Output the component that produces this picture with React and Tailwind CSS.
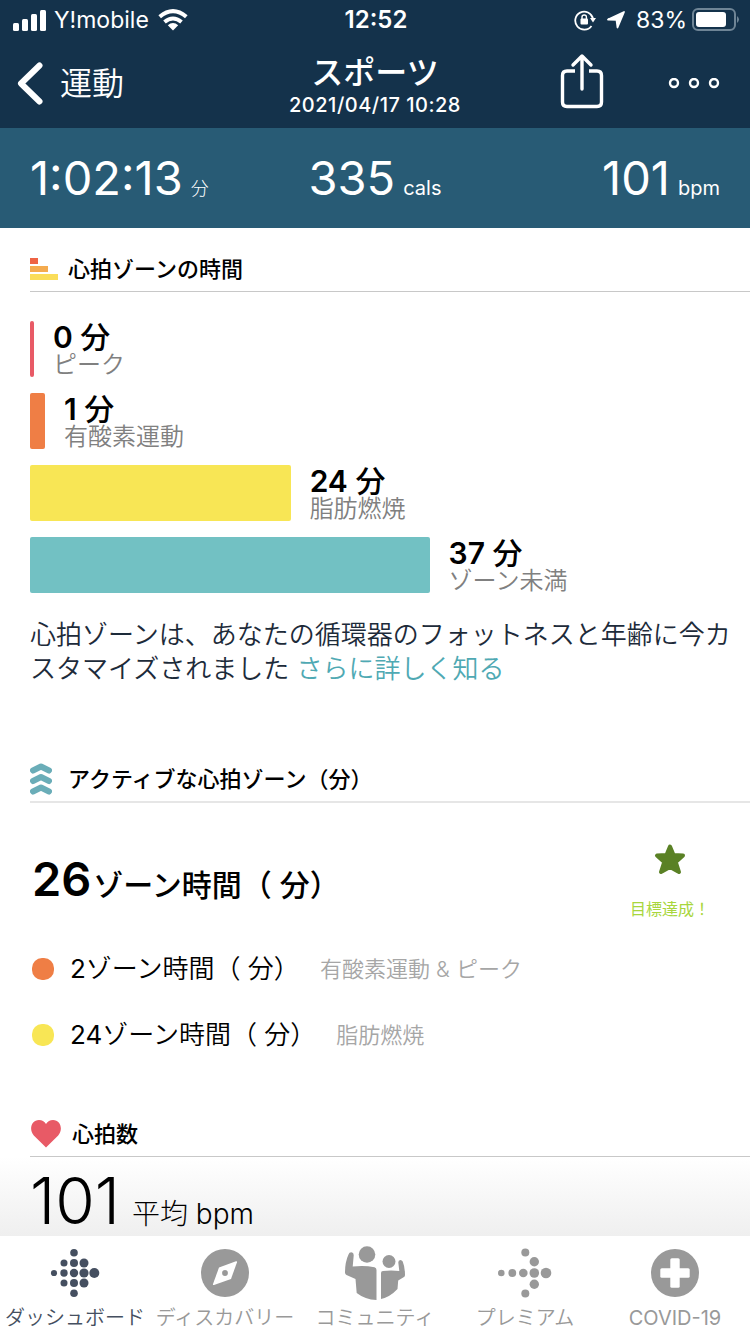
const zones = [
  { minutes: 0, label: 'ピーク', bar: 'w-1 bg-[#e85a66]' },
  { minutes: 1, label: '有酸素運動', bar: 'w-[15px] bg-[#ef7e45]' },
  { minutes: 24, label: '脂肪燃焼', bar: 'w-[36.2%] bg-[#f8e655]' },
  { minutes: 37, label: 'ゾーン未満', bar: 'w-[55.5%] bg-[#72c1c3]' },
]

const stats = [
  { value: '1:02:13', unit: '分', align: 'justify-start', unitStyle: 'text-[18px] font-light' },
  { value: '335', unit: 'cals', align: 'justify-center', unitStyle: 'text-[20px]' },
  { value: '101', unit: 'bpm', align: 'justify-end', unitStyle: 'text-[20px]' },
]

const tabs = [
  { label: 'ダッシュボード', icon: DashboardIcon, color: 'text-[#454f60]', weight: 'font-[350]' },
  { label: 'ディスカバリー', icon: CompassIcon, color: 'text-[#999999]', weight: 'font-[350]' },
  { label: 'コミュニティ', icon: CommunityIcon, color: 'text-[#999999]', weight: 'font-[350]' },
  { label: 'プレミアム', icon: PremiumIcon, color: 'text-[#999999]', weight: 'font-[350]' },
  { label: 'COVID-19', icon: CrossIcon, color: 'text-[#999999]', weight: 'font-normal' },
]

function DashboardIcon() {
  return (
    <svg width="50" height="50" viewBox="0 0 50 50" fill="currentColor" aria-hidden="true">
      <circle cx="24" cy="4.700" r="3.800" />
      <circle cx="14" cy="15" r="3.500" />
      <circle cx="24" cy="15" r="4" />
      <circle cx="34" cy="15" r="4.500" />
      <circle cx="4" cy="25" r="3.100" />
      <circle cx="14" cy="25" r="3.700" />
      <circle cx="24" cy="25" r="4.200" />
      <circle cx="34" cy="25" r="4.600" />
      <circle cx="44.300" cy="25" r="5" />
      <circle cx="14" cy="35" r="3.500" />
      <circle cx="24" cy="35" r="4" />
      <circle cx="34" cy="35" r="4.500" />
      <circle cx="24" cy="45.300" r="3.800" />
    </svg>
  )
}

function CompassIcon() {
  return (
    <svg width="50" height="50" viewBox="0 0 50 50" aria-hidden="true">
      <circle cx="25" cy="25" r="24" fill="currentColor" />
      <path d="M19 19.500 36 13.200q1.300-.3 1 1L31 31 14 37q-1.400.4-1-1z" fill="#fff" />
      <circle cx="25" cy="25" r="2.900" fill="currentColor" />
    </svg>
  )
}

function CommunityIcon() {
  return (
    <svg width="62" height="56" viewBox="0 0 62 56" fill="currentColor" aria-hidden="true">
      <circle cx="23" cy="9.500" r="8.300" />
      <circle cx="45" cy="16.500" r="6.500" />
      <path d="M4.500 9.500Q5.200 7.300 7.300 7.300 9.900 7.500 9.700 10.500L8.700 21.500Q20 20 30.500 22.200 32.500 22.700 32.500 25V55Q21 54.500 12.700 48L11.500 34 2.500 30Q1 29.300 1 27.500 1 17 4.500 9.500z" />
      <path d="M37 54V28Q37 26.200 39 26 47 25.200 55.300 26L54.300 17.500Q54.300 15 56.300 14.900 58 14.900 58.700 16.500 61 22 61 30 61 31.500 60 32L54.200 35.500 53.500 44Q46 52 37 54z" />
    </svg>
  )
}

function PremiumIcon() {
  return (
    <svg width="54" height="52" viewBox="0 0 54 52" fill="currentColor" aria-hidden="true">
      <circle cx="3.300" cy="26" r="3.300" />
      <circle cx="14.300" cy="26" r="3.900" />
      <circle cx="25.300" cy="26" r="4.300" />
      <circle cx="36.300" cy="26" r="4.800" />
      <circle cx="48" cy="26" r="5.300" />
      <circle cx="36.300" cy="14.700" r="4.700" />
      <circle cx="36.300" cy="37.300" r="4.700" />
      <circle cx="27.300" cy="5.400" r="4" />
      <circle cx="27.300" cy="46.600" r="4" />
    </svg>
  )
}

function CrossIcon() {
  return (
    <svg width="50" height="50" viewBox="0 0 50 50" aria-hidden="true">
      <circle cx="25" cy="25" r="24" fill="currentColor" />
      <rect x="20.300" y="10.300" width="9.400" height="29.400" rx="1.500" fill="#fff" />
      <rect x="10.300" y="20.300" width="29.400" height="9.400" rx="1.500" fill="#fff" />
    </svg>
  )
}

function StatusBar() {
  return (
    <div className="grid h-10 grid-cols-[1fr_auto_1fr] items-center pl-3 pr-2.5 text-[23px] leading-10">
      <div className="flex items-center gap-2">
        <svg width="34" height="22" viewBox="0 0 34 22" fill="currentColor" aria-hidden="true">
          <rect x="1" y="14" width="6" height="8" rx="1.500" />
          <rect x="10" y="10" width="6" height="12" rx="1.500" />
          <rect x="19" y="5" width="6" height="17" rx="1.500" />
          <rect x="28" y="1" width="6" height="21" rx="1.500" />
        </svg>
        <span>Y!mobile</span>
        <svg width="32" height="24" viewBox="0 0 32 24" fill="none" stroke="currentColor" strokeWidth="4" aria-hidden="true">
          <path d="M2.700 8.800Q16-2.500 29.300 8.800" />
          <path d="M7.500 14Q16 7 24.500 14" />
          <path d="M16 22.500 10.800 17.200Q16 13 21.200 17.200z" fill="currentColor" stroke="none" />
        </svg>
      </div>
      <span className="text-[24px] font-semibold">12:52</span>
      <div className="flex items-center justify-end">
        <svg className="mr-2.5" width="22" height="22" viewBox="0 0 22 22" fill="none" stroke="currentColor" strokeWidth="1.800" aria-hidden="true">
          <path d="M17.500 17A9 9 0 1 1 19 9.500" />
          <path d="M16 9h6l-3 4.500z" fill="currentColor" stroke="none" />
          <rect x="6.500" y="9.500" width="7.500" height="6" rx="1" fill="currentColor" stroke="none" />
          <path d="M8 10V8q0-2 2.200-2t2.200 2v2" strokeWidth="1.400" />
        </svg>
        <svg className="mr-2.5" width="20" height="20" viewBox="0 0 20 20" fill="currentColor" stroke="currentColor" strokeWidth="1.800" strokeLinejoin="round" aria-hidden="true">
          <path d="M18 2 11.500 17.500 10.500 9.800 2 9.500z" />
        </svg>
        <span>83%</span>
        <svg className="ml-1" width="49" height="24" viewBox="0 0 49 24" aria-hidden="true">
          <rect x="2" y="1" width="42" height="21" rx="5" fill="none" stroke="#6f8596" strokeWidth="2" />
          <rect x="5" y="4" width="30" height="15" rx="3" fill="currentColor" />
          <path d="M46 8q4 3.500 0 7z" fill="#6f8596" />
        </svg>
      </div>
    </div>
  )
}

function Header() {
  return (
    <header className="bg-[#14324b] text-white">
      <StatusBar />
      <div className="grid h-22 grid-cols-[1fr_auto_1fr] items-center px-4">
        <button type="button" className="flex items-center gap-4 text-[32px] font-[350] leading-10">
          <svg width="28" height="44" viewBox="0 0 28 44" fill="none" stroke="currentColor" strokeWidth="6" strokeLinecap="round" strokeLinejoin="round" aria-hidden="true">
            <path d="M23.500 3.500 5 21.500l18.500 18" />
          </svg>
          運動
        </button>
        <div className="pt-1.5 text-center">
          <h1 className="text-[32px] font-medium leading-9">スポーツ</h1>
          <p className="text-[20px] font-medium leading-7 tracking-wide">2021/04/17 10:28</p>
        </div>
        <div className="flex items-center justify-end gap-16 pr-3.5">
          <button type="button" aria-label="共有" className="pb-1.5">
            <svg width="44" height="56" viewBox="0 0 44 56" fill="none" stroke="currentColor" strokeWidth="3.400" strokeLinecap="round" strokeLinejoin="round" aria-hidden="true">
              <path d="M22 36V4M13 12 22 3l9 9" strokeWidth="3.400" />
              <path d="M15 18H7q-4.500 0-4.500 4.500V49q0 4.500 4.500 4.500h30q4.500 0 4.500-4.500V22.500Q41.500 18 37 18h-8" strokeLinecap="butt" />
            </svg>
          </button>
          <button type="button" aria-label="メニュー">
            <svg width="52" height="12" viewBox="0 0 52 12" fill="none" stroke="currentColor" strokeWidth="2.400" aria-hidden="true">
              <circle cx="6" cy="5" r="4" />
              <circle cx="26" cy="5" r="4" />
              <circle cx="46" cy="5" r="4" />
            </svg>
          </button>
        </div>
      </div>
    </header>
  )
}

function SectionTitle({ icon, children }) {
  return (
    <div className="flex h-11 items-center gap-2.5">
      {icon}
      <h2 className="text-[22px] font-medium leading-8">{children}</h2>
    </div>
  )
}

function ZoneRow({ color, value, label }) {
  return (
    <li className="flex items-center">
      <span className={`ml-0.5 mr-4 size-[22px] rounded-[10px] ${color}`} />
      <span className="text-[26px] font-[350] leading-10">
        <span className="font-normal">{value}</span>ゾーン時間（ 分）
      </span>
      <span className="ml-5 text-[22px] font-[350] leading-10 text-[#a6a6a6]">{label}</span>
    </li>
  )
}

export default function App() {
  return (
    <div className="flex min-h-screen flex-col bg-white font-['Inter','Noto_Sans_CJK_JP',sans-serif] text-black" lang="ja">
      <Header />

      <div className="grid h-25 grid-cols-3 bg-[#285b75] px-7.5 text-white">
        {stats.map((s) => (
          <p key={s.unit} className={`flex items-baseline gap-2 pt-5 leading-15 ${s.align}`}>
            <span className="text-[47px]">{s.value}</span>
            <span className={s.unitStyle}>{s.unit}</span>
          </p>
        ))}
      </div>

      <main className="flex flex-1 flex-col">
        <section className="pl-7.5 pt-[19px]">
          <div className="border-b border-[#c8c8c8]">
            <SectionTitle
              icon={
                <svg width="28" height="22" viewBox="0 0 28 22" aria-hidden="true">
                  <path d="M0 0h8v6H0z" fill="#ee6345" />
                  <path d="M0 8h18v6H0z" fill="#f4ab4f" />
                  <path d="M0 16h28v6H0z" fill="#fadd59" />
                </svg>
              }
            >
              心拍ゾーンの時間
            </SectionTitle>
          </div>
          <ul className="mt-[29px] flex flex-col gap-4">
            {zones.map((z) => (
              <li key={z.label} className="flex h-14 gap-[19px]">
                <span className={`shrink-0 rounded-xs ${z.bar}`} />
                <div>
                  <p className="text-[30px] font-semibold leading-8">
                    {z.minutes} <span className="font-medium">分</span>
                  </p>
                  <p className="text-[24px] font-[350] leading-6 text-[#808080]">{z.label}</p>
                </div>
              </li>
            ))}
          </ul>
          <p className="mt-[25px] pr-3 text-[26px] font-[350] leading-[34px] text-[#1d2b3a]">
            心拍ゾーンは、あなたの循環器のフォットネスと年齢に今カスタマイズされました{' '}
            <a href="#learn" className="text-[#4fa9b3]">さらに詳しく知る</a>
          </p>
        </section>

        <section className="mt-[71px] pl-7.5">
          <div className="border-b-2 border-[#e6e6e6]">
            <SectionTitle
              icon={
                <svg className="mr-1.5" width="22" height="32" viewBox="0 0 22 32" fill="none" stroke="#6aadb8" strokeWidth="6" strokeLinecap="round" strokeLinejoin="round" aria-hidden="true">
                  <path d="M3 7.500 11 3.500l8 4M3 18 11 14l8 4M3 28.500 11 24.500l8 4" />
                </svg>
              }
            >
              アクティブな心拍ゾーン（分）
            </SectionTitle>
          </div>
          <div className="flex items-start justify-between pr-10 pt-10">
            <p className="flex items-baseline gap-0.5 pl-0.5 pt-1 leading-16">
              <span className="text-[47px] font-semibold">26</span>
              <span className="text-[30px] font-medium">ゾーン時間（ 分）</span>
            </p>
            <div className="flex flex-col items-center text-[#a8d63d]">
              <svg width="32" height="34" viewBox="0 0 32 34" fill="#5a8125" stroke="#5a8125" strokeWidth="4" strokeLinejoin="round" aria-hidden="true">
                <path d="M16 3.500 19.500 12 29 12.500 21.800 19 25 29 16 24 7 29 10.200 19 3 12.500 12.500 12z" />
              </svg>
              <p className="mt-5 text-[16px] leading-6">目標達成！</p>
            </div>
          </div>
          <ul className="mt-7 flex flex-col gap-6.5">
            <ZoneRow color="bg-[#ef7e45]" value={2} label="有酸素運動 & ピーク" />
            <ZoneRow color="bg-[#f8e655]" value={24} label="脂肪燃焼" />
          </ul>
        </section>

        <section className="mt-[57px] flex flex-1 flex-col">
          <div className="ml-7.5 border-b border-[#c8c8c8]">
            <SectionTitle
              icon={
                <svg width="32" height="28" viewBox="0 0 32 28" fill="#e85a66" aria-hidden="true">
                  <path d="M16 27.500 3.800 15.500C-1.500 9.500 1.500 0 9 0q4.500 0 7 4 2.500-4 7-4c7.500 0 10.500 9.500 5.200 15.500z" />
                </svg>
              }
            >
              心拍数
            </SectionTitle>
          </div>
          <p className="flex flex-1 items-baseline gap-3 bg-linear-to-b from-white to-[#efefef] pl-7.5 pt-3 font-light">
            <span className="text-[64px] leading-16">101</span>
            <span className="text-[28px] leading-8">平均 bpm</span>
          </p>
        </section>
      </main>

      <nav className="sticky bottom-0 grid h-[98px] grid-cols-5 bg-white">
        {tabs.map(({ label, icon: Icon, color, weight }) => (
          <button key={label} type="button" className={`flex flex-col items-center whitespace-nowrap ${color}`}>
            <span className="flex h-[70px] items-center pt-1">
              <Icon />
            </span>
            <span className={`text-[20px] leading-6 ${weight}`}>{label}</span>
          </button>
        ))}
      </nav>
    </div>
  )
}
